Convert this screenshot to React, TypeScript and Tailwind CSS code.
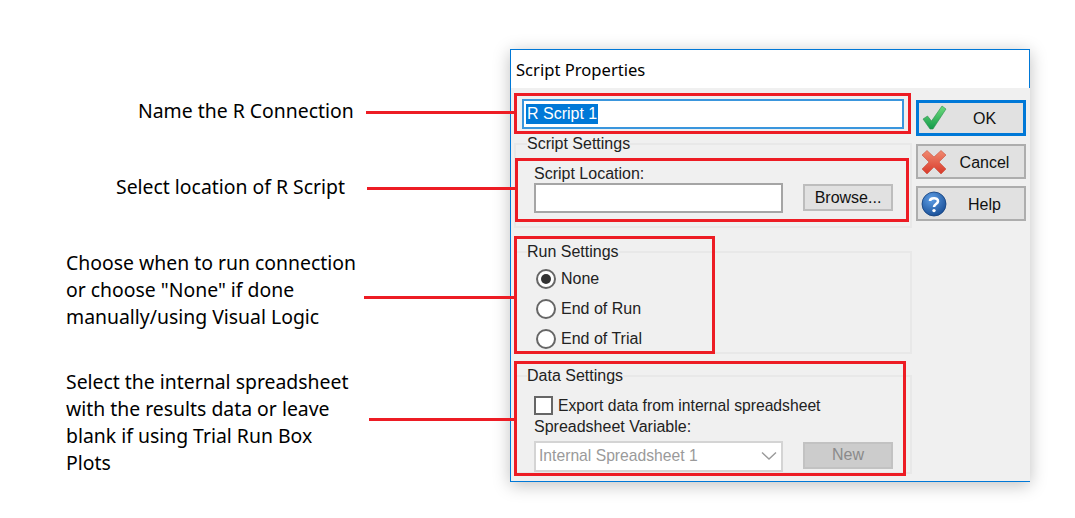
const notes = "text-[19.4px] leading-[27px] text-black whitespace-nowrap font-['Noto_Sans',sans-serif]";

const CheckIcon = () => (
  <svg width="26" height="26" viewBox="0 0 26 26">
    <defs>
      <linearGradient id="ok" x1="0" y1="0" x2="0" y2="1">
        <stop offset="0" stopColor="#6fdc7c" />
        <stop offset="1" stopColor="#139a4a" />
      </linearGradient>
    </defs>
    <path d="M1 14 L5.5 11 L9.5 16 L20 1 L24 4 L11 24 L8 24 Z" fill="url(#ok)" stroke="#2b8f4e" strokeWidth="0.6" />
  </svg>
);

const CrossIcon = () => (
  <svg width="26" height="26" viewBox="0 0 26 26">
    <defs>
      <linearGradient id="no" x1="0" y1="0" x2="0" y2="1">
        <stop offset="0" stopColor="#f08a70" />
        <stop offset="1" stopColor="#d8392a" />
      </linearGradient>
    </defs>
    <path d="M1 6 L6 1.5 L13 8 L20 1.5 L25 6 L18 13 L25 20 L20 25 L13 18 L6 25 L1 20 L8 13 Z" fill="url(#no)" stroke="#c9503c" strokeWidth="0.6" />
  </svg>
);

const HelpIcon = () => (
  <svg width="26" height="26" viewBox="0 0 26 26">
    <defs>
      <radialGradient id="hp" cx="0.4" cy="0.3" r="0.8">
        <stop offset="0" stopColor="#5f9fe6" />
        <stop offset="1" stopColor="#12478f" />
      </radialGradient>
    </defs>
    <circle cx="13" cy="13" r="12" fill="url(#hp)" stroke="#123f7c" strokeWidth="0.8" />
    <path d="M9 10 C9 6.5 17 6 17 10.2 C17 13 13 13 13 16" fill="none" stroke="#fff" strokeWidth="2.6" />
    <circle cx="13" cy="19.6" r="1.7" fill="#fff" />
  </svg>
);

const SideButton = ({ icon, label, active, cls }: { icon: React.ReactNode; label: string; active?: boolean; cls: string }) => (
  <div className={`relative flex items-center w-[110px] bg-[#e1e1e1] pl-[3px] ${active ? "border-[3px] border-[#0078d7]" : "border-2 border-[#adadad]"} ${cls}`}>
    {icon}
    <span className={`flex-1 text-center pr-[2px] text-[16px] text-[#111] ${active ? "pt-px" : "pt-[3px]"}`}>{label}</span>
  </div>
);

const Group = ({ title, cls, children }: { title: string; cls: string; children: React.ReactNode }) => (
  <div className={`relative w-[398px] border-2 border-[#e8e8e8] ${cls}`}>
    <span className="absolute left-[11px] top-[-10px] bg-[#f0f0f0] leading-[18px] text-[16px] text-[#222]">{title}</span>
    {children}
  </div>
);

const Radio = ({ label, on }: { label: string; on?: boolean }) => (
  <div className="flex items-center h-[30px] pl-[20px] gap-[5px]">
    <span className="w-[20px] h-[20px] rounded-full border-2 border-[#666] bg-white flex items-center justify-center">
      {on && <span className="w-[10px] h-[10px] rounded-full bg-[#333]" />}
    </span>
    <span>{label}</span>
  </div>
);

const Dialog = () => (
  <div className="w-[520px] h-[433px] mt-[49px] bg-[#f0f0f0] border-l border-b border-[#0078d7] shadow-[0_3px_16px_rgba(0,0,0,0.25)] flex flex-col font-['Liberation_Sans',sans-serif] text-[16px] text-[#222]">
    <div className="h-[39px] pt-[2px] bg-white flex items-center pl-[5px] text-[16.6px] text-black font-['Noto_Sans',sans-serif] border-t border-r border-[#0078d7]">
      Script Properties
    </div>
    <div className="flex flex-1">
      <div className="w-[405px] pl-[3px] pt-[11px]">
        <div className="ml-[8px] w-[382px] h-[30px] border-2 border-[#3a96dd] bg-white flex items-center pl-[2px]">
          <span className="bg-[#0078d7] text-white px-[1px] h-[20px] leading-[20px]">R Script 1</span>
        </div>
        <Group title="Script Settings" cls="mt-[14px] h-[85px]">
          <div className="pl-[18px] pt-[19px] leading-[19px]">Script Location:</div>
          <div className="flex items-start pl-[18px]">
            <div className="w-[249px] h-[30px] bg-white border-2 border-[#a5a5a5]" />
            <div className="ml-[20px] mt-px w-[90px] h-[27px] bg-[#e1e1e1] border-2 border-[#bdbdbd] flex items-center justify-center text-[#111]">Browse...</div>
          </div>
        </Group>
        <Group title="Run Settings" cls="mt-[23px] h-[103px] pt-[11px]">
          <Radio label="None" on />
          <Radio label="End of Run" />
          <Radio label="End of Trial" />
        </Group>
        <Group title="Data Settings" cls="mt-[21px] h-[99px]">
          <div className="flex items-center pl-[18px] pt-[17px] gap-[5px]">
            <span className="w-[19px] h-[19px] bg-white border-2 border-[#666]" />
            <span className="text-[15.7px]">Export data from internal spreadsheet</span>
          </div>
          <div className="pl-[18px] -mt-px leading-[20px]">Spreadsheet Variable:</div>
          <div className="flex items-start pl-[18px] mt-[4px]">
            <div className="w-[249px] h-[31px] bg-white border-2 border-[#d4d4d4] flex items-center justify-between pl-[3px] pr-[3px] text-[#9a9a9a] text-[15.7px]">
              <span>Internal Spreadsheet 1</span>
              <svg width="18" height="10" viewBox="0 0 18 10">
                <path d="M2 1.5 L9 8 L16 1.5" fill="none" stroke="#9a9a9a" strokeWidth="1.4" />
              </svg>
            </div>
            <div className="ml-[20px] mt-px w-[90px] h-[27px] bg-[#cccccc] border-2 border-[#c2c2c2] flex items-center justify-center text-[#8a8a8a]">New</div>
          </div>
        </Group>
      </div>
      <div className="flex flex-col pt-[12px]">
        <SideButton icon={<CheckIcon />} label="OK" active cls="h-[36px]" />
        <SideButton icon={<CrossIcon />} label="Cancel" cls="h-[35px] mt-[8px]" />
        <SideButton icon={<HelpIcon />} label="Help" cls="h-[35px] mt-[7px]" />
      </div>
    </div>
  </div>
);

export default function App() {
  return (
    <div className="relative w-[1075px] h-[518px] bg-white overflow-hidden flex">
      <div className={`w-[510px] pt-[97px] ${notes}`}>
        <div className="ml-[138px]">Name the R Connection</div>
        <div className="ml-[116px] mt-[49px]">Select location of R Script</div>
        <div className="ml-[66px] mt-[49px]">
          Choose when to run connection<br />or choose "None" if done<br />manually/using Visual Logic
        </div>
        <div className="ml-[66px] mt-[38px]">
          Select the internal spreadsheet<br />with the results data or leave<br />blank if using Trial Run Box<br />Plots
        </div>
      </div>
      <Dialog />

      {/* red callouts drawn over the screenshot */}
      <div className="absolute left-[366px] top-[111px] w-[148px] h-[3px] bg-[#ed1c24]" />
      <div className="absolute left-[367px] top-[187px] w-[148px] h-[3px] bg-[#ed1c24]" />
      <div className="absolute left-[364px] top-[296px] w-[150px] h-[3px] bg-[#ed1c24]" />
      <div className="absolute left-[369px] top-[418px] w-[145px] h-[3px] bg-[#ed1c24]" />
      <div className="absolute left-[514px] top-[93px] w-[397px] h-[41px] border-[3px] border-[#ed1c24]" />
      <div className="absolute left-[515px] top-[158px] w-[394px] h-[64px] border-[3px] border-[#ed1c24]" />
      <div className="absolute left-[514px] top-[236px] w-[201px] h-[118px] border-[3px] border-[#ed1c24]" />
      <div className="absolute left-[514px] top-[361px] w-[392px] h-[115px] border-[3px] border-[#ed1c24]" />
    </div>
  );
}
